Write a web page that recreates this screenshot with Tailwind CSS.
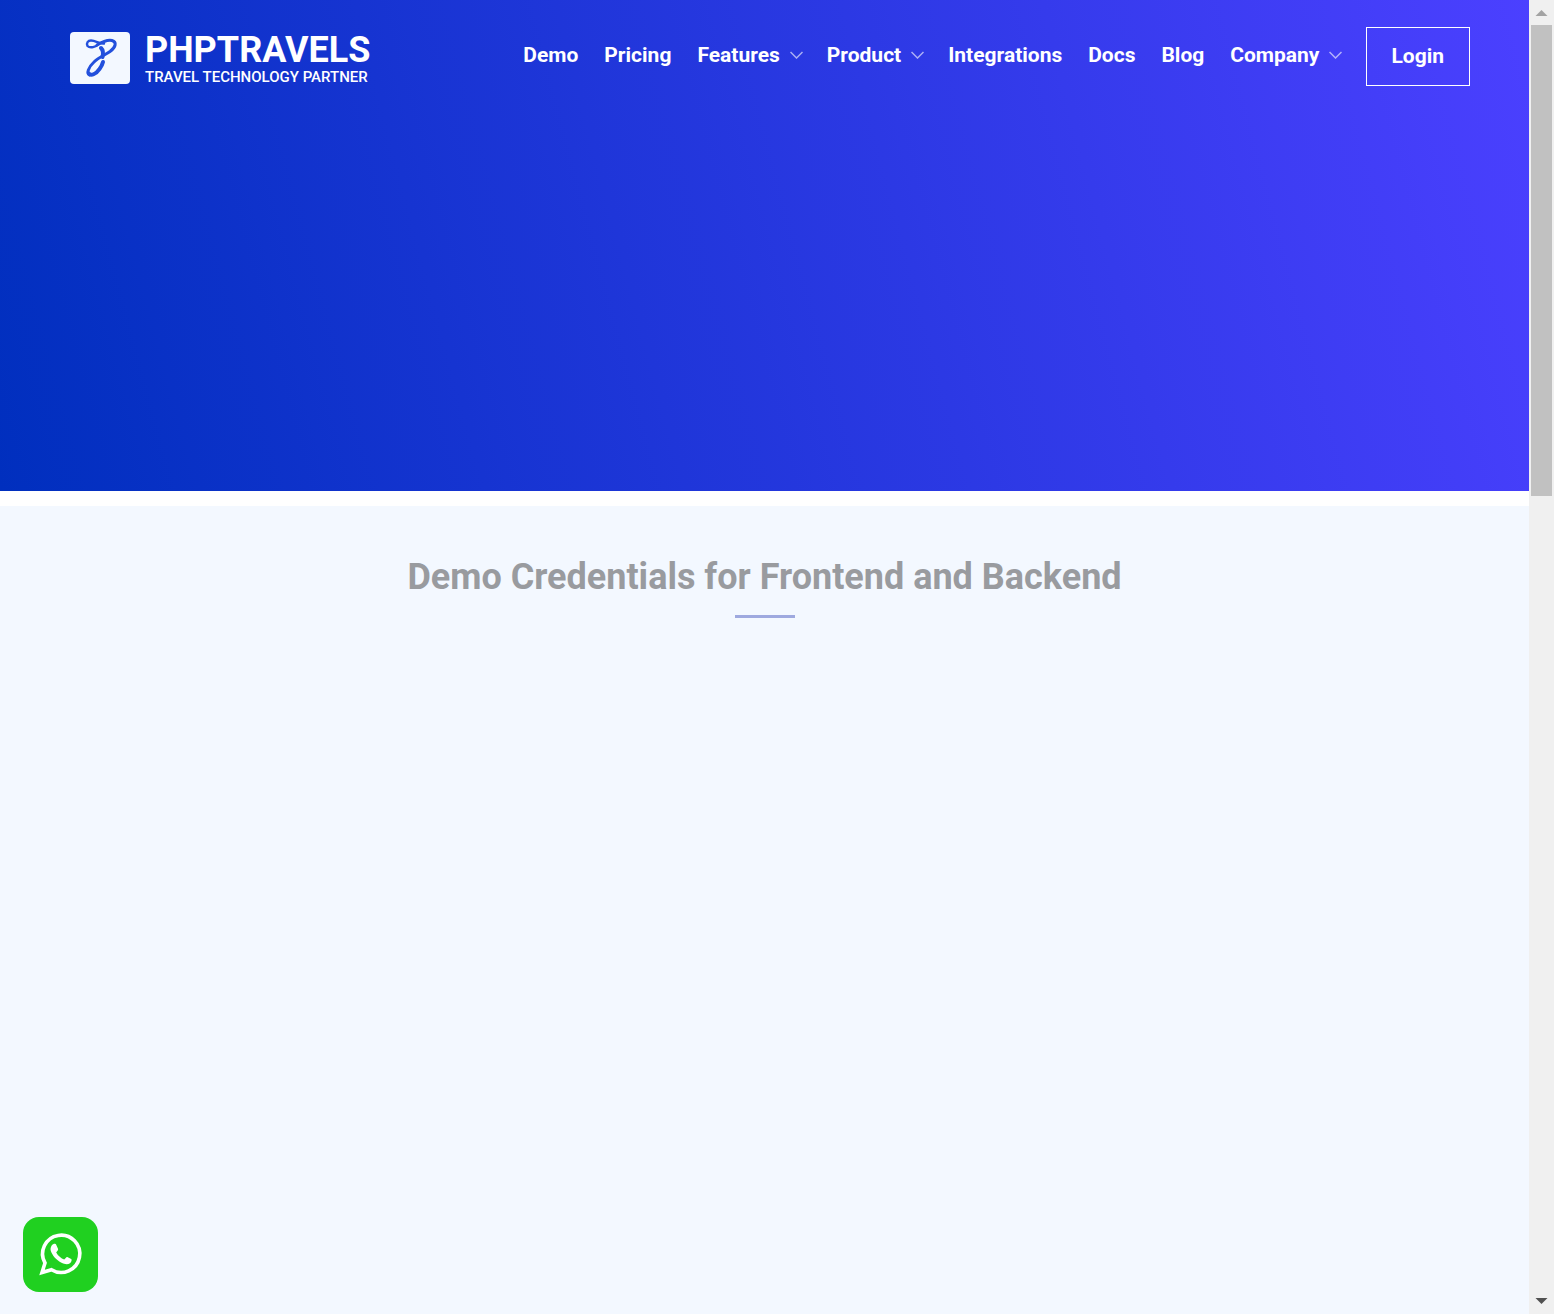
<!DOCTYPE html>
<html lang="en">
<head>
<meta charset="utf-8">
<meta name="viewport" content="width=device-width, initial-scale=1">
<title>PHPTRAVELS Demo</title>
<script src="https://cdn.jsdelivr.net/npm/@tailwindcss/browser@4"></script>
</head>
<body class="flex min-h-screen bg-white font-['Roboto',sans-serif]">
<div class="flex min-w-0 grow flex-col">
  <header class="h-[491px] bg-linear-[75deg,#002fbe,#4b40ff] pt-[27px] pr-[59px] pl-[70px] text-white">
    <div class="flex items-start justify-between">
      <a href="#" class="flex items-start gap-[15px] pt-[5px]">
        <svg class="h-[52px] w-[60px] shrink-0 rounded bg-[#f3f8ff]" viewBox="0 0 60 52" fill="none" stroke="#2350dc" stroke-linecap="round" stroke-linejoin="round" aria-hidden="true">
          <path d="M29 12C26 15 20 16.500 17.500 14C16 11 18 8.500 21 8.500C26 8.500 29 12 34 11.500" stroke-width="2.400"/>
          <path d="M27 13C32 10 38 7.500 42 8.500C47 10 46 15 40 19.500C35 23 29 25 24 30C18.500 35 16 42 19.500 43" stroke-width="3"/>
          <path d="M31 16C33 18 33.500 21 32.500 25" stroke-width="4"/>
          <path d="M33 30C32 34 28 40.500 24 42C22 43 20 43 19 41.500" stroke-width="4"/>
        </svg>
        <span class="flex flex-col">
          <span class="text-[36px] leading-[36px] font-bold">PHPTRAVELS</span>
          <span class="text-[15px] leading-[18px] font-medium">TRAVEL TECHNOLOGY PARTNER</span>
        </span>
      </a>
      <nav class="flex items-start gap-[26px] text-[21px] leading-[56px] font-bold" aria-label="Main">
        <a href="#">Demo</a>
        <a href="#">Pricing</a>
        <a href="#" class="flex items-center gap-2.5">Features <svg class="-mr-0.5 h-2 w-[13px]" viewBox="0 0 13 8" fill="none" stroke="#fff" stroke-opacity=".6" stroke-width="1.5" aria-hidden="true"><path d="M.5 1l6 6 6-6"/></svg></a>
        <a href="#" class="flex items-center gap-2.5">Product <svg class="-mr-0.5 h-2 w-[13px]" viewBox="0 0 13 8" fill="none" stroke="#fff" stroke-opacity=".6" stroke-width="1.5" aria-hidden="true"><path d="M.5 1l6 6 6-6"/></svg></a>
        <a href="#">Integrations</a>
        <a href="#">Docs</a>
        <a href="#">Blog</a>
        <a href="#" class="flex items-center gap-2.5">Company <svg class="-mr-0.5 h-2 w-[13px]" viewBox="0 0 13 8" fill="none" stroke="#fff" stroke-opacity=".6" stroke-width="1.5" aria-hidden="true"><path d="M.5 1l6 6 6-6"/></svg></a>
        <a href="#" class="h-[59px] border border-white pr-[25px] pl-6 leading-[57px]">Login</a>
      </nav>
    </div>
  </header>
  <main class="mt-[15px] flex grow flex-col items-center bg-[#f3f8ff] pt-[50px]">
    <h1 class="text-[36px] leading-[42px] font-bold text-[#999b9f]">Demo Credentials for Frontend and Backend</h1>
    <div class="mt-[17px] h-[3px] w-[60px] bg-[#9ea9df]"></div>
  </main>
</div>
<div class="sticky top-0 flex h-screen w-[25px] shrink-0 flex-col items-center justify-between bg-[#f0f0f0]" aria-hidden="true">
  <div class="flex w-full flex-col items-center">
    <svg class="h-[25px] w-[25px]" viewBox="0 0 25 25" fill="#a3a3a3"><path d="M6.500 16l6-6 6 6z"/></svg>
    <div class="h-[471px] w-[21px] bg-[#c1c1c1]"></div>
  </div>
  <svg class="h-[25px] w-[25px]" viewBox="0 0 25 25" fill="#505050"><path d="M6.500 9h12l-6 6z"/></svg>
</div>
<a href="#" aria-label="WhatsApp" class="fixed bottom-[22px] left-[23px] size-[75px] rounded-2xl bg-[#20d020]">
  <svg class="size-[75px]" viewBox="0 0 75 75" fill="none" aria-hidden="true">
    <path d="M22 46A18.600 18.600 0 1 1 28.500 52.700L19 55.500Z" stroke="#fff" stroke-width="3.600" stroke-linejoin="miter"/>
    <path fill="#fff" d="M30.500 27C31.500 26.600 32.800 26.700 33.300 27.900L35 31.800C35.300 32.700 35 33.400 33.200 35.500C35.200 39 38 41.300 41.200 42.600C42.500 41.500 43.300 39.800 44.300 40.100L48.200 42C49.300 42.700 48.300 45.200 47 46.200C44.800 47.800 41.800 47.500 38 45.500C33.500 43.200 29.500 38.500 28 34.500C26.900 31.300 28.300 27.900 30.500 27Z"/>
  </svg>
</a>
</body>
</html>
